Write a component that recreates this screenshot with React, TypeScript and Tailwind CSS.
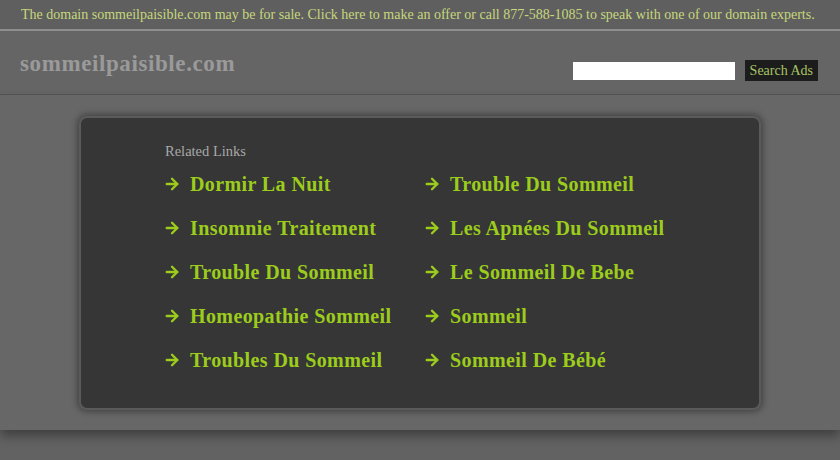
import { ArrowRight } from 'lucide-react';

const left = ['Dormir La Nuit', 'Insomnie Traitement', 'Trouble Du Sommeil', 'Homeopathie Sommeil', 'Troubles Du Sommeil'];
const right = ['Trouble Du Sommeil', 'Les Apnées Du Sommeil', 'Le Sommeil De Bebe', 'Sommeil', 'Sommeil De Bébé'];

function LinkItem({ label }: { label: string }) {
  return (
    <a href="#" className="flex items-center h-[44px] text-[#9ccc1c] font-bold text-[20px] tracking-[0.4px] leading-none">
      <ArrowRight className="w-[18px] h-[18px] ml-[-2px] mr-[9px] shrink-0" strokeWidth={3.2} />
      <span>{label}</span>
    </a>
  );
}

export default function App() {
  return (
    <div className="min-h-screen w-[840px] h-[460px] overflow-hidden bg-[#626262] font-['Liberation_Serif',serif]">
      {/* Sale banner */}
      <div className="h-[29px] bg-[#5f5f5f] flex items-center pl-[21px] text-[14px] text-[#c7d77c] whitespace-nowrap">
        The domain sommeilpaisible.com may be for sale. Click here to make an offer or call 877-588-1085 to speak with one of our domain experts.
      </div>
      <div className="h-[2px] bg-[#8e8e8e]" />

      {/* Header */}
      <div className="h-[64px] bg-[#656565] border-b border-[#555] flex items-start justify-between px-[20px]">
        <div className="mt-[16px] text-[23px] font-bold text-[#9a9a9a] tracking-[0.6px]">sommeilpaisible.com</div>
        <div className="flex items-center mt-[29px] gap-[10px] pr-[2px]">
          <input className="w-[162px] h-[18px] bg-white border-0 outline-none" />
          <button className="h-[21px] px-[5px] bg-[#1c1c1c] text-[#a9c464] text-[14px] leading-none">Search Ads</button>
        </div>
      </div>

      {/* Content */}
      <div className="h-[335px] bg-[#676767] shadow-[0_6px_10px_rgba(0,0,0,0.35)] pt-[21px] relative">
        <div className="ml-[79px] w-[682px] h-[294px] rounded-[8px] bg-[#363636] border-2 border-[#5a5a5a] shadow-[0_0_6px_2px_rgba(0,0,0,0.35)] pl-[84px] pt-[26px]">
          <div className="text-[14.5px] text-[#a8a8a8] leading-none mb-[3px]">Related Links</div>
          <div className="flex">
            <div className="w-[260px] flex flex-col">
              {left.map((l) => (
                <LinkItem key={l} label={l} />
              ))}
            </div>
            <div className="flex flex-col">
              {right.map((l) => (
                <LinkItem key={l} label={l} />
              ))}
            </div>
          </div>
        </div>
      </div>
    </div>
  );
}
